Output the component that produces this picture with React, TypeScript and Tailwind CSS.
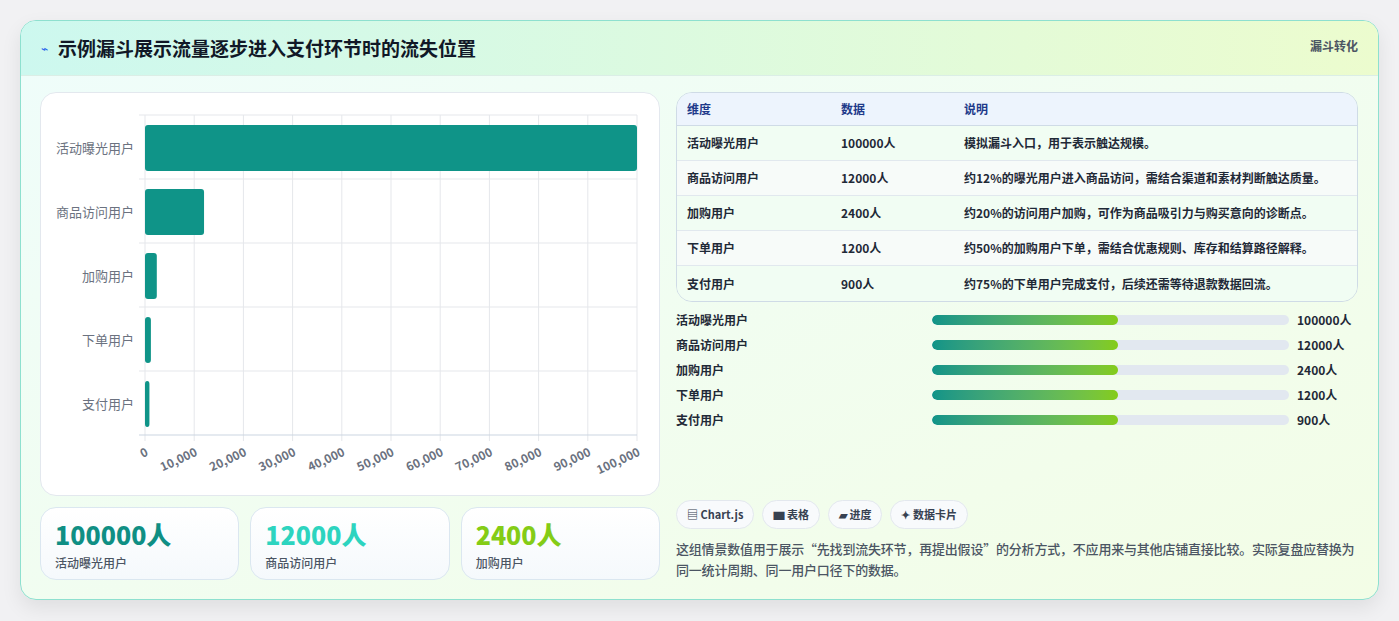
const font = { fontFamily: '"Noto Sans CJK SC", "Noto Sans", sans-serif' };

const rows = [
  { name: "活动曝光用户", v: 100000, note: "模拟漏斗入口，用于表示触达规模。" },
  { name: "商品访问用户", v: 12000, note: "约12%的曝光用户进入商品访问，需结合渠道和素材判断触达质量。" },
  { name: "加购用户", v: 2400, note: "约20%的访问用户加购，可作为商品吸引力与购买意向的诊断点。" },
  { name: "下单用户", v: 1200, note: "约50%的加购用户下单，需结合优惠规则、库存和结算路径解释。" },
  { name: "支付用户", v: 900, note: "约75%的下单用户完成支付，后续还需等待退款数据回流。" },
];

function Chart() {
  const x0 = 104, x1 = 596, y0 = 22, band = 64;
  const ticks = Array.from({ length: 11 }, (_, i) => i * 10000);
  const sx = (v: number) => x0 + ((x1 - x0) * v) / 100000;
  return (
    <svg width="620" height="403" viewBox="0 0 620 403" style={font}>
      {ticks.map((t) => (
        <line key={t} x1={sx(t)} x2={sx(t)} y1={y0} y2={y0 + band * 5 + 6} stroke="#e5e7eb" />
      ))}
      {[0, 1, 2, 3, 4, 5].map((i) => (
        <line key={i} x1={x0 - 6} x2={x1} y1={y0 + band * i} y2={y0 + band * i} stroke={i === 5 ? "#cbd5e1" : "#e5e7eb"} />
      ))}
      {rows.map((r, i) => (
        <g key={r.name}>
          <rect x={x0} y={y0 + band * i + 10} width={Math.max(sx(r.v) - x0, 4)} height={46} rx={3} fill="#0f9488" />
          <text x={93} y={y0 + band * i + 38} textAnchor="end" fontSize="13" fill="#6b7280">{r.name}</text>
        </g>
      ))}
      {ticks.map((t) => (
        <text key={t} x={sx(t) + 4} y={362} textAnchor="end" fontSize="12" fontWeight="700" fill="#6b7280"
          transform={`rotate(-25 ${sx(t) + 4} 362)`}>{t.toLocaleString("en-US")}</text>
      ))}
    </svg>
  );
}

export default function App() {
  return (
    <div className="min-h-[621px] bg-[#f1f1f3] pt-5 px-5" style={font}>
      <div className="w-[1359px] h-[580px] rounded-2xl border border-[#8ee0cf] bg-gradient-to-br from-[#effdfb] to-[#f3fde6] shadow-[0_8px_20px_rgba(0,0,0,0.08)] overflow-hidden">
        <div className="h-[55px] flex items-center justify-between px-5 bg-gradient-to-r from-[#cdf8ef] to-[#ecfcce] border-b border-[#dbeee6]">
          <div className="flex items-center gap-2.5">
            <span className="text-[#2563eb] text-xs">⌁</span>
            <h1 className="text-[19px] font-bold text-[#111827]">示例漏斗展示流量逐步进入支付环节时的流失位置</h1>
          </div>
          <span className="text-[12px] font-bold text-[#4b5563] self-start mt-4">漏斗转化</span>
        </div>
        <div className="flex gap-4 pl-[19px] pr-5 pt-4">
          <div className="w-[620px] flex flex-col gap-[11px]">
            <div className="h-[404px] rounded-2xl border border-[#e3e8ee] bg-white">
              <Chart />
            </div>
            <div className="grid grid-cols-3 gap-[11px]">
              {[["100000人", "text-[#0f8f84]", "活动曝光用户"], ["12000人", "text-[#2dd4bf]", "商品访问用户"], ["2400人", "text-[#84cc16]", "加购用户"]].map(([v, c, l]) => (
                <div key={l} className="h-[73px] rounded-2xl border border-[#dbe7f0] bg-gradient-to-b from-white to-[#f5f9fc] px-3.5 pt-2.5">
                  <div className={`text-[25px] leading-[32px] font-extrabold ${c}`}>{v}</div>
                  <div className="text-[12px] text-[#4b5563] font-medium mt-1">{l}</div>
                </div>
              ))}
            </div>
          </div>
          <div className="flex-1 flex flex-col">
            <div className="rounded-2xl border border-[#cfdbe6] overflow-hidden text-[12px] font-semibold text-[#1f2937]">
              <div className="flex h-[33px] items-center bg-[#edf4fd] text-[#1e3a8a] font-bold border-b border-[#cfdbe6]">
                <span className="w-[164px] pl-2.5">维度</span><span className="w-[123px]">数据</span><span>说明</span>
              </div>
              {rows.map((r, i) => (
                <div key={r.name} className={`flex h-[35px] items-center ${i % 2 ? "bg-[#f7fbf9]" : "bg-[#f1fdf3]"} ${i < 4 ? "border-b border-[#e1e8ee]" : ""}`}>
                  <span className="w-[164px] pl-2.5">{r.name}</span><span className="w-[123px]">{r.v}人</span><span>{r.note}</span>
                </div>
              ))}
            </div>
            <div className="mt-[9px] flex flex-col gap-[7px] text-[12px] font-bold text-[#1f2937]">
              {rows.map((r) => (
                <div key={r.name} className="flex items-center h-[18px]">
                  <span className="w-[256px]">{r.name}</span>
                  <div className="w-[357px] h-[10px] rounded-full bg-[#e2e8f0] overflow-hidden">
                    <div className="h-full w-[52%] rounded-full bg-gradient-to-r from-[#0f9488] to-[#84cc16]" />
                  </div>
                  <span className="ml-2">{r.v}人</span>
                </div>
              ))}
            </div>
            <div className="mt-auto flex gap-2 text-[11px] font-bold text-[#374151]">
              {["▤ Chart.js", "▆ 表格", "▰ 进度", "✦ 数据卡片"].map((c) => (
                <span key={c} className="h-[29px] px-2.5 flex items-center rounded-full border border-[#e3e8ee] bg-[#f8fafc]">{c}</span>
              ))}
            </div>
            <p className="mt-[9px] text-[13px] leading-[21px] font-medium tracking-[-0.2px] text-[#4b5563]">
              这组情景数值用于展示“先找到流失环节，再提出假设”的分析方式，不应用来与其他店铺直接比较。实际复盘应替换为同一统计周期、同一用户口径下的数据。
            </p>
          </div>
        </div>
      </div>
    </div>
  );
}
